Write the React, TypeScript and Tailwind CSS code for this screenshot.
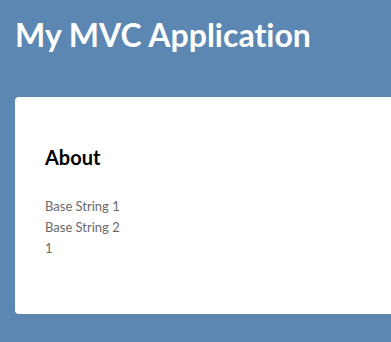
import React from 'react';

export default function App() {
  const lines = ['Base String 1', 'Base String 2', '1'];

  return (
    <div className="h-[342px] w-full overflow-hidden bg-[#5c87b2] font-['Lato','Open_Sans',sans-serif] [font-variant-ligatures:none]">
      <header className="h-[97px] pl-[15px] pt-[15px]">
        <h1 className="text-[32px] font-bold leading-[40px] text-white">My MVC Application</h1>
      </header>

      <main className="ml-[15px] h-[217px] w-[900px] rounded-[4px] bg-white pl-[30px] pt-[48px]">
        <h2 className="text-[20px] font-bold leading-[24px] text-black">About</h2>
        <div className="mt-[27px] text-[13px] leading-[21px] text-[#696969]">
          {lines.map((line, index) => (
            <p key={index}>{line}</p>
          ))}
        </div>
      </main>
    </div>
  );
}
